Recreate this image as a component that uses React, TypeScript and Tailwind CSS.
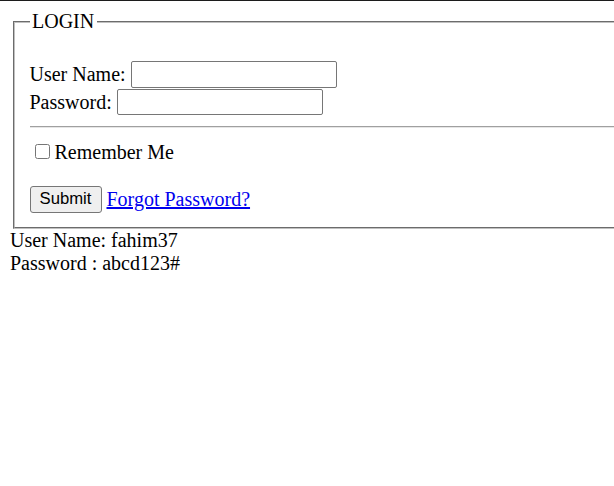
export default function App() {
  return (
    <div className="min-h-screen overflow-hidden border-t border-[#1c1c1c] bg-white px-[10px] pt-[9px] font-['Liberation_Serif',serif] text-[20px] leading-[23px] text-black">
      <fieldset className="mx-[2.5px] w-[700px] border-2 border-[#c0c0c0] px-[15px] pt-[7px] pb-[12.5px] [border-style:groove]">
        <legend className="px-[2.5px] leading-[23px]">LOGIN</legend>

        <div className="mt-[20px] flex h-[28px] items-center">
          <span>User Name:</span>
          <input
            type="text"
            className="ml-[5px] h-[27px] w-[206px] rounded-[2px] border border-[#767676] bg-white px-[2px] outline-none"
          />
        </div>
        <div className="flex h-[28px] items-center">
          <span>Password:</span>
          <input
            type="password"
            className="ml-[5px] h-[26px] w-[206px] rounded-[2px] border border-[#767676] bg-white px-[2px] outline-none"
          />
        </div>

        <hr className="mt-[10px] mb-[13px] h-0 border-t border-b border-t-[#a0a0a0] border-b-[#e6e6e6]" />

        <div className="flex h-[23px] items-center">
          <input
            type="checkbox"
            className="mr-[5px] ml-[5px] mt-[-2px] h-[15px] w-[15px]"
          />
          <span>Remember Me</span>
        </div>

        <div className="mt-[20px] flex h-[30px] items-center">
          <button
            type="button"
            className="h-[27px] w-[72px] rounded-[3px] border border-[#767676] bg-[#efefef] font-['Liberation_Sans',Arial,sans-serif] text-[16.7px] leading-none"
          >
            Submit
          </button>
          <a href="#" className="ml-[5px] text-[#0000ee] underline">
            Forgot Password?
          </a>
        </div>
      </fieldset>

      <div>User Name: fahim37</div>
      <div>Password : abcd123#</div>
    </div>
  );
}
